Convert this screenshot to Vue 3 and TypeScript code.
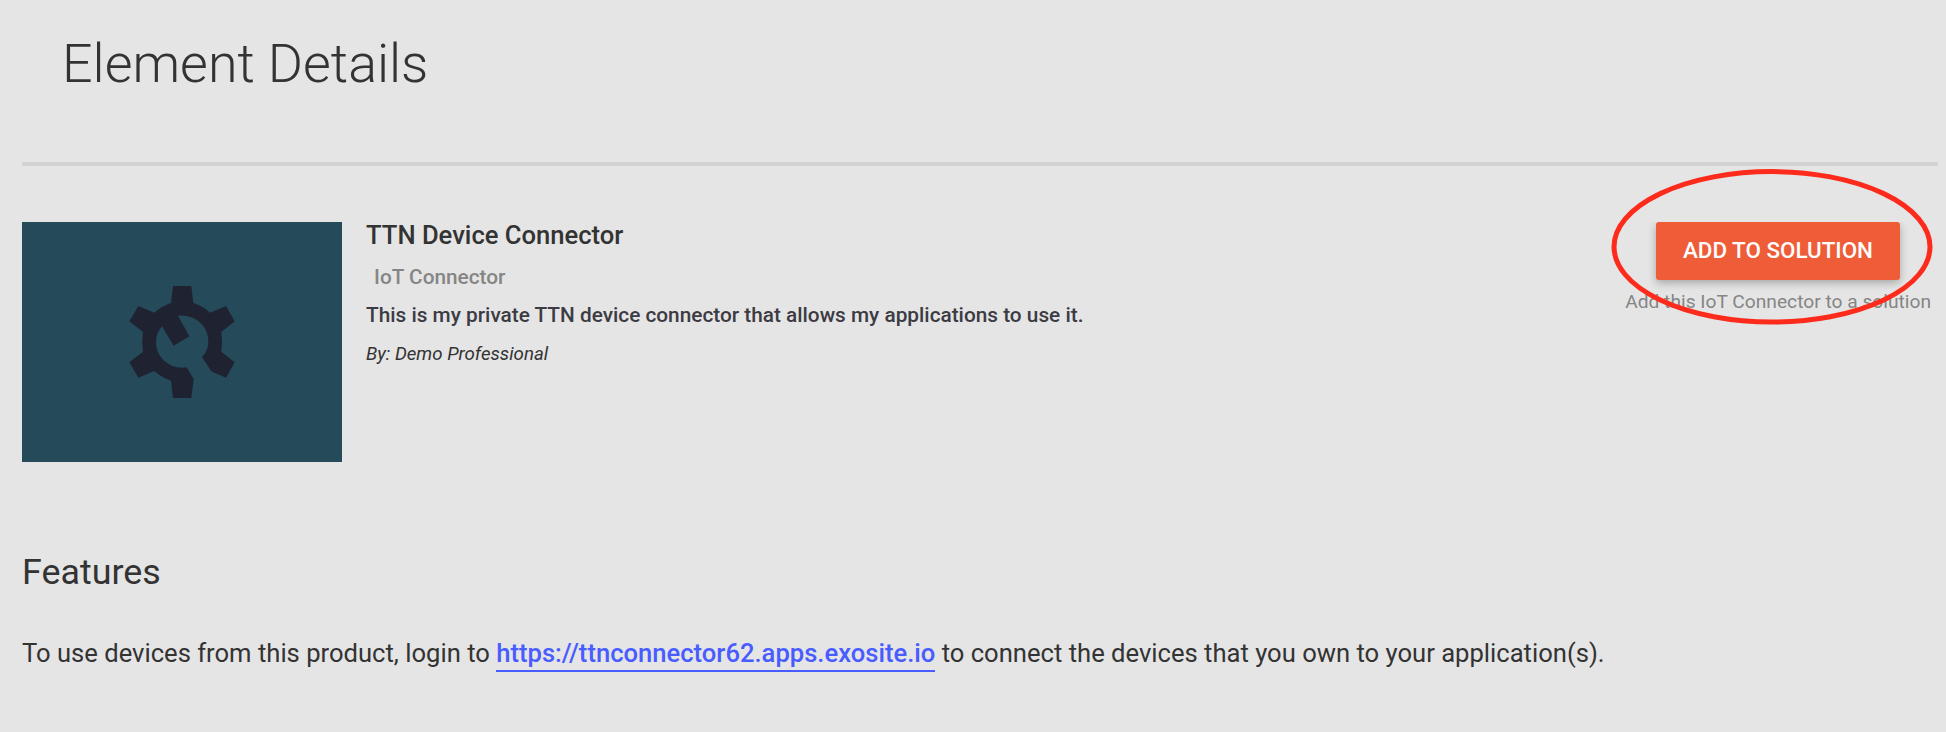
<script setup lang="ts">
interface ElementInfo {
  name: string
  kind: string
  description: string
  author: string
  link: string
}

const element: ElementInfo = {
  name: 'TTN Device Connector',
  kind: 'IoT Connector',
  description: 'This is my private TTN device connector that allows my applications to use it.',
  author: 'Demo Professional',
  link: 'https://ttnconnector62.apps.exosite.io',
}
</script>

<template>
  <main class="page">
    <h1 class="heading">Element Details</h1>
    <section class="summary">
      <div class="thumb">
        <svg class="gear" viewBox="6 6 480 480" aria-hidden="true">
          <path
            d="M219 78H274L280 129Q308 138 330 158L378 138L404 184L364 216Q368 245 364 275L404 307L378 353L334 334L306 291Q325 272 325 244C325 199 288 163 234 167L268 229L221 257L186 199C174 212 168 228 168 246C168 293 210 330 260 322L281 357L274 414H219L213 362Q186 353 163 333L115 353L88 307L129 275Q124 245 129 216L88 184L115 138L163 158Q186 138 213 129Z"
          />
        </svg>
      </div>
      <div class="info">
        <h2 class="name">{{ element.name }}</h2>
        <div class="kind">{{ element.kind }}</div>
        <p class="description">{{ element.description }}</p>
        <p class="author">By: {{ element.author }}</p>
      </div>
      <div class="action">
        <button class="add" type="button">ADD TO SOLUTION</button>
        <div class="hint">Add this {{ element.kind }} to a solution</div>
        <svg class="ring" viewBox="0 0 324 158" aria-hidden="true">
          <ellipse cx="162" cy="78.8" rx="158" ry="75.2" />
        </svg>
      </div>
    </section>
    <section class="features">
      <h2 class="subheading">Features</h2>
      <p class="text">To use devices from this product, login to <a class="link">{{ element.link }}</a> to connect the devices that you own to your application(s).</p>
    </section>
  </main>
</template>

<style>
body {
  background: #e5e5e5;
}
</style>

<style scoped>
.page {
  box-sizing: border-box;
  height: 732px;
  padding: 0 8px 0 22px;
  overflow: hidden;
  background: #e5e5e5;
  color: #333;
  font-family: Roboto, "Liberation Sans", sans-serif;
}

h1,
h2,
p {
  margin: 0;
  font-weight: 400;
  white-space: nowrap;
}

.heading {
  box-sizing: border-box;
  height: 166px;
  padding: 32px 0 0 40px;
  border-bottom: 4px solid #d3d3d3;
  font-size: 53.76px;
  font-weight: 300;
  line-height: 64px;
}

.summary {
  display: flex;
  height: 240px;
  margin-top: 56px;
}

.thumb {
  display: flex;
  align-items: center;
  justify-content: center;
  width: 320px;
  height: 240px;
  background: #254a5a;
}

.gear {
  width: 160px;
  height: 160px;
  fill: #1f2231;
}

.info {
  flex: 1;
  padding-left: 24px;
}

.name {
  height: 40px;
  font-size: 25.6px;
  font-weight: 500;
  line-height: 26px;
}

.kind {
  height: 38px;
  padding-left: 8px;
  color: #858585;
  font-size: 20.8px;
  font-weight: 500;
  line-height: 30px;
}

.description {
  height: 41px;
  color: #3c3b44;
  font-size: 20.8px;
  font-weight: 500;
  line-height: 30px;
}

.author {
  font-size: 18.66px;
  font-style: italic;
  line-height: 27px;
}

.action {
  position: relative;
  display: flex;
  flex-direction: column;
  align-items: flex-end;
  padding-right: 7px;
}

.add {
  width: 244px;
  height: 58px;
  margin-right: 31px;
  padding: 0 0 2px;
  border: 0;
  border-radius: 3px;
  background: #ef5d38;
  box-shadow: 0 3px 8px rgba(0, 0, 0, 0.28);
  clip-path: inset(0 -16px -16px -16px);
  color: #fff;
  font-family: inherit;
  font-size: 22.4px;
  font-weight: 500;
}

.hint {
  margin-top: 7px;
  color: #858585;
  font-size: 19.2px;
  line-height: 30px;
  white-space: nowrap;
}

.ring {
  position: absolute;
  top: -54px;
  right: 4px;
  width: 324px;
  height: 158px;
  fill: none;
  stroke: #fd2b1b;
  stroke-width: 5px;
}

.features {
  margin-top: 88px;
}

.subheading {
  font-size: 35.84px;
  line-height: 44px;
}

.text {
  margin-top: 41px;
  font-size: 25.6px;
  line-height: 36px;
}

.link {
  padding-bottom: 2px;
  border-bottom: 2px solid #485cff;
  color: #485cff;
  font-weight: 500;
}
</style>
